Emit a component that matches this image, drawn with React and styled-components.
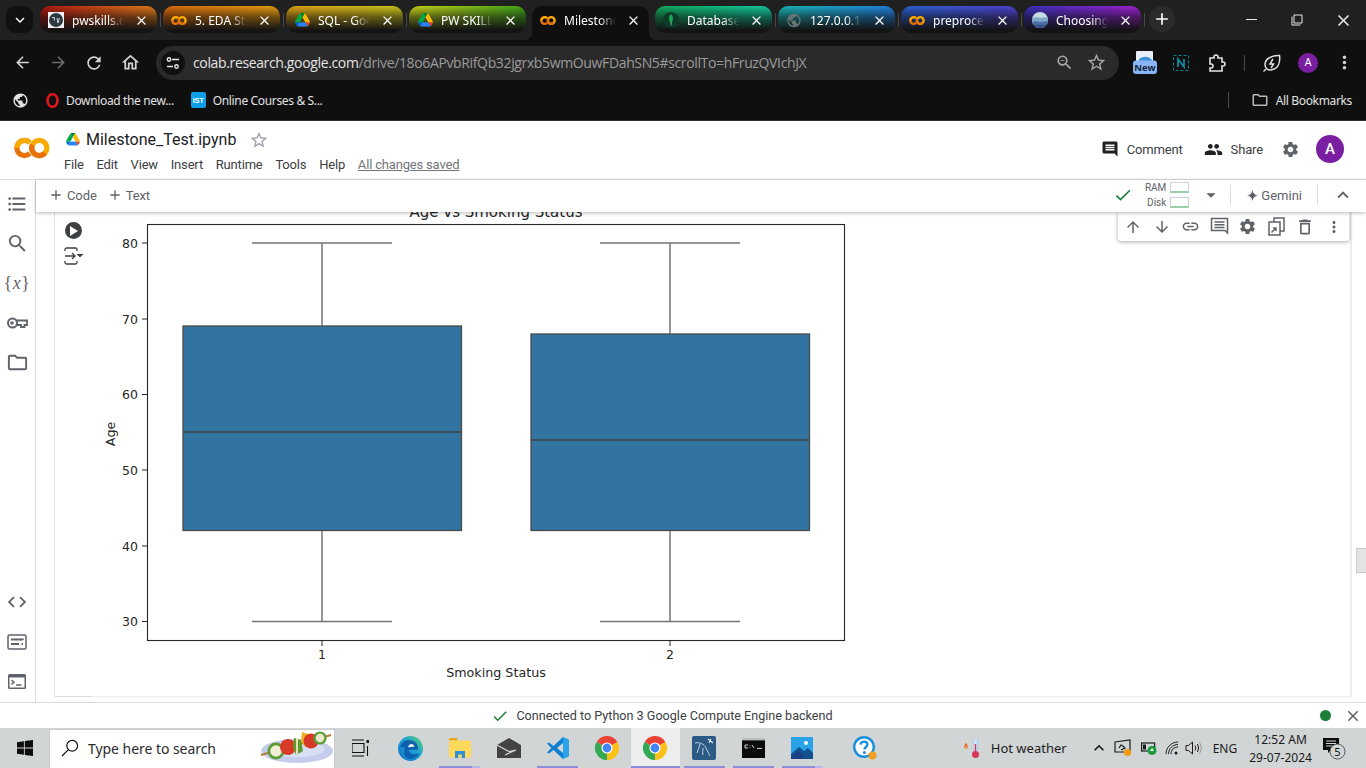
import React from "react";
import styled, { createGlobalStyle } from "styled-components";
import {
  MdArrowBack, MdArrowForward, MdRefresh, MdOutlineHome, MdClose, MdAdd, MdStarBorder, MdKeyboardArrowDown,
  MdMoreVert, MdPublic, MdComment, MdPeople, MdSettings, MdCheck, MdArrowDropDown, MdKeyboardArrowUp,
  MdArrowUpward, MdArrowDownward, MdLink, MdDeleteOutline, MdFormatListBulleted, MdSearch, MdOutlineFolder,
  MdCode, MdZoomOut, MdFilterNone,
} from "react-icons/md";

const Global = createGlobalStyle`
  html, body { margin: 0; padding: 0; background: #fff; overflow: hidden; }
  * { box-sizing: border-box; }
`;

const Page = styled.div`
  width: 1366px; height: 768px; display: flex; flex-direction: column; overflow: hidden;
  font-family: Roboto, "Liberation Sans", sans-serif;
`;

/* ---------- Chrome: tab strip ---------- */
const TabStrip = styled.div`
  height: 40px; flex: none; background: #202020; display: flex; align-items: flex-start;
  padding: 6px 0 0 6px; font-family: "Noto Sans", sans-serif;
`;
const TabMenu = styled.div`
  width: 27px; height: 27px; margin-right: 7px; border-radius: 9px; background: #111;
  display: flex; align-items: center; justify-content: center; color: #fff;
`;
const Tab = styled.div`
  width: 117px; height: 27px; border-radius: 10px; display: flex; align-items: center; flex: none;
  padding: 1px 8px 0 8px; color: #fff; font-size: 12px;
  background: linear-gradient(180deg, rgba(16,16,16,0) 0%, rgba(16,16,16,.55) 40%, #131313 90%),
    linear-gradient(90deg, ${(p) => p.$from}, ${(p) => p.$to});
`;
const ActiveTab = styled(Tab)`
  height: 34px; background: #0f0f0f; border-radius: 10px 10px 0 0; padding-bottom: 7px; position: relative;
  &::before, &::after {
    content: ""; position: absolute; bottom: 0; width: 8px; height: 8px;
  }
  &::before { left: -8px; background: radial-gradient(circle at 0 0, transparent 8px, #0f0f0f 8.5px); }
  &::after { right: -8px; background: radial-gradient(circle at 100% 0, transparent 8px, #0f0f0f 8.5px); }
`;
const TabIcon = styled.span`
  width: 16px; height: 16px; flex: none; display: flex; align-items: center; justify-content: center;
`;
const TabTitle = styled.span`
  width: 52px; margin-left: 8px; white-space: nowrap; overflow: hidden; flex: none;
  -webkit-mask-image: linear-gradient(90deg, #000 68%, transparent 100%);
  mask-image: linear-gradient(90deg, #000 68%, transparent 100%);
`;
const TabClose = styled.span`
  margin-left: auto; margin-right: 0; display: flex; color: #fff;
`;
const TabSep = styled.span`
  width: 1px; height: 14px; margin: 7px 2.5px 0; background: ${(p) => (p.$hidden ? "transparent" : "#484848")}; flex: none;
`;
const NewTab = styled.div`
  width: 26px; height: 26px; border-radius: 50%; background: #2b2b2b; color: #fff; margin-left: 2px;
  display: flex; align-items: center; justify-content: center; flex: none;
`;
const WindowControls = styled.div`
  margin-left: auto; display: flex; color: #e8e8e8; margin-top: -6px; height: 40px;
`;
const WindowButton = styled.div`
  width: 46px; height: 40px; display: flex; align-items: center; justify-content: center;
`;

/* ---------- Chrome: address bar ---------- */
const AddressRow = styled.div`
  height: 45px; flex: none; background: #0f0f0f; display: flex; align-items: center; padding-left: 4px;
  font-family: "Noto Sans", sans-serif;
`;
const NavButton = styled.div`
  width: 36px; height: 34px; flex: none; display: flex; align-items: center; justify-content: center;
  color: ${(p) => (p.$dim ? "#6b6b6b" : "#d4d4d4")};
`;
const Omnibox = styled.div`
  width: 963px; height: 34px; flex: none; border-radius: 17px; background: #2a2a2a; margin: 0 8px;
  display: flex; align-items: center; padding: 0 7px 0 5px;
`;
const SiteChip = styled.div`
  width: 24px; height: 24px; border-radius: 50%; background: #101010; flex: none; color: #e6e6e6;
  display: flex; align-items: center; justify-content: center;
`;
const Url = styled.span`
  margin-left: 8px; margin-right: auto; font-size: 14px; color: #9b9b9b; white-space: nowrap; font-family: "Open Sans", sans-serif; letter-spacing: -0.36px;
  b { font-weight: 400; color: #e4e4e4; }
`;
const OmniIcon = styled.div`
  width: 32px; display: flex; justify-content: center; color: #a8a8a8; flex: none;
`;
const ToolSep = styled.span`
  width: 1px; height: 16px; background: #4a4a4a; margin: 0 9px; flex: none;
`;
const Avatar = styled.div`
  width: ${(p) => p.$size}px; height: ${(p) => p.$size}px; border-radius: 50%; background: #7b1fa2; color: #fff; flex: none;
  display: flex; align-items: center; justify-content: center; font-size: ${(p) => p.$font}px;
  font-family: Roboto, sans-serif; font-weight: ${(p) => p.$weight || 400};
`;

/* ---------- Chrome: bookmarks ---------- */
const BookmarkRow = styled.div`
  height: 35px; flex: none; background: #0f0f0f; display: flex; align-items: center; padding: 0 14px 5px 12px;
  color: #e2e2e2; font-size: 12px; font-family: "Noto Sans", sans-serif; letter-spacing: -0.35px;
`;
const Bookmark = styled.span`
  display: flex; align-items: center; gap: ${(p) => p.$gap}px; margin-left: ${(p) => p.$left}px; white-space: nowrap;
`;
const IstBadge = styled.span`
  width: 15px; height: 16px; background: #0a9fe6; color: #fff; border-radius: 2px; font-size: 7px; font-weight: 700; letter-spacing: 0;
  display: flex; align-items: center; justify-content: center; font-family: "Liberation Sans", sans-serif;
`;
const BookmarkEnd = styled.div`
  margin-left: auto; display: flex; align-items: center; gap: 7px;
`;
const BookmarkSep = styled.span`
  width: 1px; height: 16px; background: #4a4a4a; margin-right: 15px;
`;

/* ---------- Colab header ---------- */
const ColabHeader = styled.header`
  height: 60px; flex: none; background: #fff; border-top: 1px solid #2e2e2e; border-bottom: 1px solid #dadce0;
  display: flex; align-items: flex-start; padding-left: 14px;
`;
const LogoSlot = styled.div`
  width: 50px; height: 100%; display: flex; align-items: center; flex: none; padding-bottom: 4px;
`;
const TitleBlock = styled.div`
  display: flex; flex-direction: column; padding-top: 8px;
`;
const TitleRow = styled.div`
  display: flex; align-items: center; height: 21px; padding-left: 2px;
`;
const Title = styled.span`
  font-size: 16px; color: #202124; margin-left: 6px;
`;
const TitleStar = styled.span`
  display: flex; color: #9aa0a6; margin-left: 13px;
`;
const MenuRow = styled.nav`
  display: flex; gap: 12.8px; font-size: 13px; color: #3c4043; margin-top: 4px; height: 20px; align-items: center; letter-spacing: -0.18px;
`;
const Saved = styled.span`
  color: #70757a; text-decoration: underline;
`;
const HeaderRight = styled.div`
  margin-left: auto; height: 100%; display: flex; align-items: center; padding: 0 22px 2px 0; font-size: 13px; color: #3c4043; letter-spacing: -0.15px;
`;
const HeaderAction = styled.span`
  display: flex; align-items: center; gap: 8px; margin-right: ${(p) => p.$right}px;
`;

/* ---------- Colab body ---------- */
const Main = styled.div`
  height: 522px; flex: none; display: flex; background: #fff;
`;
const Sidebar = styled.aside`
  width: 36px; flex: none; border-right: 1px solid #dadce0; display: flex; flex-direction: column;
  justify-content: space-between; padding: 12px 0 9px; color: #5f6368;
`;
const SideGroup = styled.div`
  display: flex; flex-direction: column; gap: 15.5px; align-items: center; padding-right: 1px;
`;
const SideIcon = styled.span`
  width: 24px; height: 24px; display: flex; align-items: center; justify-content: center;
`;
const VarIcon = styled(SideIcon)`
  font-family: "Liberation Serif", serif; font-size: 18px; white-space: nowrap; letter-spacing: 0.5px;
  i { font-style: italic; }
`;
const Workspace = styled.div`
  flex: 1; min-width: 0; display: flex; flex-direction: column;
`;
const NotebookBar = styled.div`
  height: 32px; flex: none; display: flex; align-items: center; padding: 0 12px 2px 12px; background: #fff; font-size: 13px; color: #5f6368;
  box-shadow: 0 1px 4px rgba(0,0,0,.28); position: relative; z-index: 3;
`;
const AddCell = styled.span`
  display: flex; align-items: center; gap: 3px; margin-right: 10px; letter-spacing: -0.1px;
`;
const BarRight = styled.div`
  margin-left: auto; display: flex; align-items: center; height: 100%;
`;
const Meters = styled.div`
  display: grid; grid-template-columns: auto 19px; column-gap: 4px; row-gap: 4px; font-size: 10px; color: #5f6368; margin: 0 0 0 12px;
  justify-items: end; align-items: center;
`;
const Meter = styled.span`
  width: 19px; height: 11px; border: 1px solid #cfd2d5; border-bottom: 2px solid #9ccfa9; display: block;
`;
const DropSlot = styled.span`
  display: flex; margin-left: 11px;
`;
const BarSep = styled.span`
  width: 1px; height: 20px; background: #dadce0; margin: ${(p) => p.$margin};
`;
const Gemini = styled.span`
  display: flex; align-items: center; gap: 3px;
`;
const Content = styled.div`
  flex: 1; min-height: 0; position: relative; overflow: hidden; padding-left: 18px; display: flex; align-items: flex-start;
`;
const Cell = styled.div`
  width: 1298px; height: 485px; border-left: 1px solid #e3e3e3; border-right: 2px solid #ededed; border-bottom: 1px solid #eeeeee;
  display: flex; position: relative; flex: none;
  &::after { content: ""; position: absolute; left: 0; bottom: -1px; width: 36px; height: 1px; background: #dcdcdc; }
`;
const Gutter = styled.div`
  width: 37px; flex: none; display: flex; flex-direction: column; align-items: center; padding-top: 10px; gap: 8px; color: #3c4043;
`;
const RunButton = styled.span`
  width: 17px; height: 17px; border-radius: 50%; background: #3c4043; display: flex; align-items: center; justify-content: center; flex: none;
`;
const Plot = styled.svg`
  display: block; width: 900px; height: 484px; flex: none;
  text { font-family: "DejaVu Sans", sans-serif; fill: #262626; }
`;
const CellTools = styled.div`
  position: absolute; top: 0; right: 17px; width: 231px; height: 29px; background: #fff; border-radius: 0 0 3px 3px;
  box-shadow: 0 1px 4px rgba(0,0,0,.35); display: flex; align-items: center; justify-content: space-between; padding: 0 5px; color: #5f6368; z-index: 2;
`;
const CellTool = styled.span`
  width: 20px; height: 20px; display: flex; align-items: center; justify-content: center;
`;
const ScrollThumb = styled.div`
  position: absolute; right: 0; top: 336px; width: 10px; height: 25px; background: #e3e3e3; border: 1px solid #c9c9c9; border-right: 0;
`;

/* ---------- Status bar ---------- */
const StatusBar = styled.div`
  height: 26px; flex: none; background: #fff; border-top: 1px solid #dadce0; display: flex; align-items: center; position: relative;
  font-size: 12.6px; color: #3c4043; justify-content: center; padding-right: 42px;
`;
const StatusMsg = styled.span`
  display: flex; align-items: center; gap: 7px;
`;
const StatusEnd = styled.div`
  position: absolute; right: 4px; top: 0; height: 100%; display: flex; align-items: center; gap: 13px; color: #5f6368;
`;
const Dot = styled.span`
  width: 11px; height: 11px; border-radius: 50%; background: #188038;
`;

/* ---------- Windows taskbar ---------- */
const Taskbar = styled.footer`
  height: 40px; flex: none; background: #d1d5d5; display: flex; align-items: stretch; font-family: "Noto Sans", sans-serif; color: #1b1b1b;
`;
const StartButton = styled.div`
  width: 49px; display: flex; align-items: center; justify-content: center; flex: none;
`;
const SearchBox = styled.div`
  width: 286px; margin-top: 1px; background: #fff; display: flex; align-items: center; flex: none; padding: 0 0 2px 11px; position: relative;
  font-size: 14px; color: #2b2b2b; border: 1px solid #c8cbcb; border-bottom: 0; letter-spacing: -0.05px;
`;
const SearchText = styled.span`
  margin-left: 9px;
`;
const Kebab = styled.span`
  margin-left: auto; display: flex; margin-bottom: 2px;
`;
const TaskItem = styled.div`
  width: ${(p) => p.$w || 48.9}px; flex: none; display: flex; align-items: center; justify-content: center; position: relative;
  background: ${(p) => (p.$active ? "#eceeee" : "transparent")};
  margin-left: ${(p) => p.$left || 0}px;
  &::after {
    content: ${(p) => (p.$open ? '""' : "none")}; position: absolute; left: ${(p) => (p.$active ? 0 : 4)}px; right: ${(p) => (p.$active ? 0 : 4)}px; bottom: 0; height: 2px;
    background: ${(p) => (p.$stack ? "linear-gradient(90deg, #8c8cd8 80%, #b9b9e8 80%)" : "#8c8cd8")};
  }
`;
const Tray = styled.div`
  margin-left: auto; display: flex; align-items: center; font-size: 13px; padding-right: 20px;
`;
const Weather = styled.span`
  display: flex; align-items: center; gap: 9px; margin-right: 21px; white-space: nowrap;
`;
const TraySlot = styled.span`
  width: ${(p) => p.$w}px; display: flex; justify-content: center; flex: none;
`;
const Lang = styled.span`
  font-size: 12px; margin: 0 12px 0 8px;
`;
const Clock = styled.span`
  display: flex; flex-direction: column; align-items: center; font-size: 12px; line-height: 18px; margin-right: 10px; white-space: nowrap; padding-top: 2px; letter-spacing: 0.02px;
`;

/* ---------- Drawings ---------- */
const CoLogo = ({ w = 36, h = 22 }) => (
  <svg width={w} height={h} viewBox="0 0 36 22" fill="none">
    <circle cx="25.3" cy="11" r="7.6" stroke="#F9AB00" strokeWidth="5.2" />
    <path d="M18.5 7.6A7.6 7.6 0 0 0 25.3 18.6A7.6 7.6 0 0 0 31 16" stroke="#E8710A" strokeWidth="5.2" />
    <path d="M15.8 5.6A7.6 7.6 0 1 0 15.8 16.4" stroke="#E8710A" strokeWidth="5.2" />
    <path d="M3 11A7.6 7.6 0 0 1 15.8 5.6" stroke="#F9AB00" strokeWidth="5.2" />
  </svg>
);
const DriveLogo = ({ size = 15 }) => (
  <svg width={size} height={size * 0.9} viewBox="0 0 87.3 78">
    <path d="m6.6 66.85 3.85 6.65c.8 1.4 1.95 2.5 3.3 3.3l13.75-23.8h-27.5c0 1.55.4 3.1 1.2 4.5z" fill="#0066da" />
    <path d="m43.65 25-13.75-23.8c-1.35.8-2.5 1.9-3.3 3.3l-25.4 44a9.06 9.06 0 0 0 -1.2 4.5h27.5z" fill="#00ac47" />
    <path d="m73.55 76.8c1.35-.8 2.5-1.9 3.3-3.3l1.6-2.75 7.65-13.25c.8-1.4 1.2-2.95 1.2-4.5h-27.502l5.852 11.5z" fill="#ea4335" />
    <path d="m43.65 25 13.75-23.8c-1.35-.8-2.9-1.2-4.5-1.2h-18.5c-1.6 0-3.15.45-4.5 1.2z" fill="#00832d" />
    <path d="m59.8 53h-32.3l-13.75 23.8c1.35.8 2.9 1.2 4.5 1.2h50.8c1.6 0 3.15-.45 4.5-1.2z" fill="#2684fc" />
    <path d="m73.4 26.5-12.7-22c-.8-1.4-1.95-2.5-3.3-3.3l-13.75 23.8 16.15 28h27.45c0-1.55-.4-3.1-1.2-4.5z" fill="#ffba00" />
  </svg>
);
const PwIcon = () => (
  <svg width="16" height="16" viewBox="0 0 16 16">
    <rect width="16" height="16" fill="#f2f2f2" />
    <circle cx="8" cy="8" r="7" fill="#2b3a42" />
    <path d="M4 5.5h2.4v3M9 6l1 5 1.4-5" stroke="#e8e8e8" strokeWidth=".9" fill="none" />
  </svg>
);
const MongoIcon = () => (
  <svg width="16" height="16" viewBox="0 0 16 16">
    <circle cx="8" cy="8" r="8" fill="#0c3b2a" />
    <path d="M8 2c2.4 2.6 2.6 6.2 0 9.6C5.4 8.2 5.6 4.6 8 2z" fill="#13aa52" />
    <rect x="7.7" y="10" width=".7" height="3.4" fill="#b8c4c2" />
  </svg>
);
const WaveIcon = () => (
  <svg width="16" height="16" viewBox="0 0 16 16">
    <defs><clipPath id="wv"><circle cx="8" cy="8" r="8" /></clipPath></defs>
    <g clipPath="url(#wv)">
      <rect width="16" height="16" fill="#c6dbe6" />
      <path d="M0 6c4-2 8 1 16-1v11H0z" fill="#7fa6c6" />
      <path d="M0 10c4-2 8 1 16-1v7H0z" fill="#4d6fa6" />
      <path d="M0 13c4-1 8 1 16-1v4H0z" fill="#3a4f8a" />
    </g>
  </svg>
);
const ChromeLogo = ({ size = 24 }) => (
  <svg width={size} height={size} viewBox="0 0 24 24">
    <path d="M12 12L1.6 6A12 12 0 0 1 22.4 6z" fill="#ea4335" />
    <path d="M12 12L1.6 6A12 12 0 0 0 12 24z" fill="#34a853" />
    <path d="M12 12L22.4 6A12 12 0 0 1 12 24z" fill="#fbc116" />
    <circle cx="12" cy="12" r="5.6" fill="#fff" />
    <circle cx="12" cy="12" r="4.4" fill="#4285f4" />
  </svg>
);
const EdgeLogo = () => (
  <svg width="25" height="25" viewBox="0 0 24 24">
    <defs>
      <linearGradient id="eg" x1="0" y1="1" x2="1" y2="0">
        <stop offset="0" stopColor="#0b6fc4" /><stop offset=".55" stopColor="#1e9fd8" /><stop offset="1" stopColor="#5ed46a" />
      </linearGradient>
    </defs>
    <circle cx="12" cy="12" r="12" fill="url(#eg)" />
    <path d="M2 10C4 5 9 3.4 13 4.4c4.5 1.2 6.6 4.4 6.2 8.8h-9c.2 3 3 4.6 6 4.4 1.6-.1 3-.6 4-1.2-1.6 4.2-6 6.6-10 5.2C6 20 4.6 15 7 11.6 5 11 3.4 10.4 2 10z" fill="#0a57a5" opacity=".85" />
    <path d="M9.6 10.8c.2-2.2 2-3.4 3.6-3.2 1.4.2 2.4 1.4 2.4 2.8z" fill="#fff" opacity=".9" />
  </svg>
);
const FolderApp = () => (
  <svg width="24" height="22" viewBox="0 0 24 22">
    <path d="M1 2.5C1 1.7 1.7 1 2.5 1h6l2 2.5H1z" fill="#e8a317" />
    <rect x="1" y="3.5" width="22" height="17" rx="1" fill="#ffd95c" />
    <path d="M7 21v-7h10v7h-3.2v-3.5h-3.6V21z" fill="#2f8fd8" />
  </svg>
);
const MailApp = () => (
  <svg width="24" height="20" viewBox="0 0 24 20">
    <path d="M0 7L12 0l12 7v13H0z" fill="#434343" />
    <path d="M0 7l12 6.6 7-1.6L8 17" stroke="#d1d5d5" strokeWidth="1.2" fill="none" />
  </svg>
);
const VsCode = () => (
  <svg width="24" height="24" viewBox="0 0 24 24">
    <path d="M17 1l6 3v16l-6 3L7.5 14l-4.6 3.6L1 16.4 5.4 12 1 7.6l1.9-1.2L7.5 10z" fill="#0e7fd0" />
    <path d="M17 7l-6 5 6 5z" fill="#d1d5d5" />
    <path d="M17 1l6 3v16l-6 3z" fill="#2aa3ec" />
  </svg>
);
const MySqlApp = () => (
  <svg width="24" height="24" viewBox="0 0 24 24">
    <rect width="24" height="24" rx="2" fill="#2b5a84" />
    <path d="M3 7c5-1 9 1 11 5s3 6 4 8M8 8c-1 4-2 6-3 9M11 12c0 3-1 4 0 7" stroke="#c7d6e2" strokeWidth="1" fill="none" />
    <path d="M16 3l5 4M19 3l-2 4" stroke="#e6edf2" strokeWidth="1.1" fill="none" />
  </svg>
);
const CmdApp = () => (
  <svg width="23" height="20" viewBox="0 0 23 20">
    <rect width="23" height="20" fill="#0b0b0b" />
    <rect width="23" height="2.4" fill="#b9bcbc" />
    <path d="M3 7h3M3 7v3h3M8 7v.6M8 9.4v.6M10 7l2 3M15 10.4h5" stroke="#d6d6d6" strokeWidth="1" fill="none" />
  </svg>
);
const PhotosApp = () => (
  <svg width="22" height="22" viewBox="0 0 22 22">
    <rect width="22" height="22" fill="#29a3e8" />
    <circle cx="15" cy="6" r="2" fill="#fff" />
    <path d="M0 17l8-7 5 4 4-3 5 5v6H0z" fill="#12518f" />
    <path d="M0 20l8-6 6 8H0z" fill="#1c3f86" />
  </svg>
);
const HelpApp = () => (
  <svg width="24" height="24" viewBox="0 0 24 24">
    <circle cx="11" cy="11" r="11" fill="#1a8ee0" />
    <circle cx="11" cy="11" r="8.6" fill="#fff" />
    <path d="M7.6 8.6C7.8 6.6 9.2 5.6 11 5.6c2 0 3.4 1.2 3.4 3 0 2.4-3 2.4-3 5" stroke="#1a8ee0" strokeWidth="2.4" fill="none" />
    <circle cx="11.4" cy="16.4" r="1.5" fill="#1a8ee0" />
    <circle cx="19.5" cy="19.5" r="4" fill="#f0a020" />
  </svg>
);
const WinLogo = () => (
  <svg width="16" height="16" viewBox="0 0 16 16" fill="#0c0c0c">
    <path d="M0 2.2L6.9 1.2V7.6H0zM7.8 1.1L16 0V7.6H7.8zM0 8.4H6.9V14.8L0 13.8zM7.8 8.4H16V16L7.8 14.9z" />
  </svg>
);
const Magnifier = () => (
  <svg width="18" height="18" viewBox="0 0 18 18" fill="none" stroke="#111" strokeWidth="1.2">
    <circle cx="11.2" cy="6.8" r="5.4" /><path d="M7.2 10.8L1 17" />
  </svg>
);
const KebabArt = () => (
  <svg width="74" height="34" viewBox="0 0 74 34">
    <ellipse cx="37" cy="21" rx="36" ry="12" fill="#c4cdec" />
    <ellipse cx="37" cy="19" rx="28" ry="8" fill="#d8def3" />
    <path d="M1 25L71 5" stroke="#b07a3a" strokeWidth="2" />
    <circle cx="16" cy="21" r="8.5" fill="#5c9a34" /><circle cx="16" cy="21" r="5.8" fill="#f1efd6" />
    <circle cx="28" cy="17" r="8" fill="#d83a28" />
    <path d="M34 8l7 2 2 11-7 4-3-8z" fill="#5f9a2e" /><path d="M36 8l2 1v15l-2 1z" fill="#e6e0b8" />
    <path d="M42 2l9 3 0 10-6 2-4-6z" fill="#f0b020" />
    <circle cx="51" cy="11" r="7.5" fill="#d83a28" />
    <circle cx="60" cy="8" r="6.6" fill="#5c9a34" /><circle cx="60" cy="8" r="4.4" fill="#e8e8c8" />
  </svg>
);
const TaskView = () => (
  <svg width="18" height="18" viewBox="0 0 18 18" fill="none" stroke="#111" strokeWidth="1.1">
    <path d="M0 1h12M0 17h12M0 4.5h12v9H0z" /><rect x="14.5" y="1" width="2.5" height="3" fill="#111" stroke="none" /><path d="M15.5 7v10" />
  </svg>
);
const OutputIcon = () => (
  <svg width="20" height="18" viewBox="0 0 20 18" fill="none" stroke="#3c4043" strokeWidth="1.3">
    <path d="M1 4V2.5C1 1.6 1.6 1 2.5 1h9C12.4 1 13 1.6 13 2.5V4M1 14v1.5c0 .9.6 1.5 1.500 1.5h9c.9 0 1.500-.6 1.500-1.500V14" />
    <path d="M1 9h10M8 6l3 3-3 3" /><path d="M12.500 7h7l-3.500 3.500z" fill="#3c4043" stroke="none" />
  </svg>
);
const CommentLines = () => (
  <svg width="19" height="19" viewBox="0 0 19 19" fill="none" stroke="#5f6368" strokeWidth="1.5">
    <path d="M1.500 1.500h16v14.500l-2.500-2.500H1.500z" /><path d="M4.500 5h10M4.500 7.800h10M4.500 10.600h10" />
  </svg>
);
const MirrorIcon = () => (
  <svg width="17" height="19" viewBox="0 0 17 19" fill="none" stroke="#5f6368" strokeWidth="1.500">
    <path d="M6 5V1h10v13h-4" /><path d="M1 5h11v13H1z" /><path d="M3.500 15.500l4.500-4.500M5 11h3v3" />
  </svg>
);
const KeyIcon = () => (
  <svg width="21" height="12" viewBox="0 0 21 12" fill="none" stroke="#5f6368" strokeWidth="2">
    <circle cx="5.500" cy="6" r="4.500" /><path d="M10 3.500h10V8h-2.500v2H14V8h-4" strokeWidth="1.800" /><circle cx="5" cy="6" r=".8" fill="#5f6368" />
  </svg>
);
const FormIcon = () => (
  <svg width="20" height="16" viewBox="0 0 20 16" fill="none" stroke="#5f6368" strokeWidth="1.500">
    <rect x="1" y="1" width="18" height="14" rx="1.500" /><path d="M4 5.500h12v.2M4 10h8M14.500 10h1.500" strokeWidth="1.800" />
  </svg>
);
const TerminalIcon = () => (
  <svg width="18" height="15" viewBox="0 0 18 15">
    <rect width="18" height="15" rx="1.500" fill="#5f6368" /><rect x="1.500" y="3.500" width="15" height="10" fill="#fff" />
    <path d="M3.500 6l2.500 2.200-2.500 2.200M8 11h5.500" stroke="#5f6368" strokeWidth="1.500" fill="none" />
  </svg>
);
const SparkIcon = () => (
  <svg width="11" height="11" viewBox="0 0 12 12"><path d="M6 0c.5 3.500 2.500 5.500 6 6-3.500.5-5.500 2.500-6 6-.5-3.500-2.500-5.500-6-6 3.500-.5 5.500-2.500 6-6z" fill="#5f6368" /></svg>
);
const NewExt = () => (
  <svg width="25" height="23" viewBox="0 0 25 23">
    <rect x="3" y="0" width="17" height="12" rx="1" fill="#e6eef8" />
    <path d="M6 8c5-3 9-3 13 1v3H6z" fill="#3c8fd8" />
    <rect x="0" y="9.500" width="24" height="13.500" rx="3" fill="#8ab4f8" />
    <text x="12" y="20" textAnchor="middle" fontSize="9.500" fontWeight="700" fill="#15243a" fontFamily="Noto Sans, sans-serif">New</text>
  </svg>
);
const NExt = () => (
  <svg width="16" height="16" viewBox="0 0 16 16" fill="none">
    <rect x=".5" y=".5" width="15" height="15" stroke="#0f7f95" strokeDasharray="3 2" />
    <path d="M5 12V4l6 8V4" stroke="#0f8ea6" strokeWidth="1.700" />
  </svg>
);
const Puzzle = () => (
  <svg width="18" height="18" viewBox="0 0 18 18" fill="none" stroke="#e4e4e4" strokeWidth="1.600">
    <path d="M2 4h4V3a2 2 0 0 1 4 0v1h4v4h1a2 2 0 0 1 0 4h-1v5H2v-3h1a2 2 0 0 0 0-4H2z" />
  </svg>
);
const LeafExt = () => (
  <svg width="20" height="20" viewBox="0 0 20 20" fill="none" stroke="#e0e0e0" strokeWidth="1.500">
    <path d="M17.500 2.500C18.500 10 16 16 9 17c-3 .4-6-2-6-5.500C3 6 10 2 17.500 2.500z" /><path d="M11 6l-3 5h3.500l-2.500 4" />
    <path d="M1.500 18.500L4 16" />
  </svg>
);
const SiteTune = () => (
  <svg width="14" height="14" viewBox="0 0 14 14" fill="none" stroke="#e6e6e6" strokeWidth="1.400">
    <circle cx="3" cy="3.500" r="1.700" /><path d="M6 3.500h7M1 10.500h6" /><circle cx="10.500" cy="10.500" r="1.700" />
  </svg>
);
const OperaO = () => (
  <svg width="13" height="15" viewBox="0 0 13 15"><ellipse cx="6.500" cy="7.500" rx="5" ry="6.300" fill="none" stroke="#e3141e" strokeWidth="2.600" /></svg>
);
const Thermo = () => (
  <svg width="20" height="24" viewBox="0 0 20 24">
    <path d="M4 7c-2 2-2.500 5 0 6 2.500-1 2-4 0-6z" fill="#e8642a" /><path d="M4 10c-1 1-1 2.500 0 3 1-.5 1-2 0-3z" fill="#ffc04a" />
    <rect x="11.500" y="2" width="4" height="15" rx="2" fill="#cfe3f5" stroke="#9cc6ea" strokeWidth=".6" />
    <circle cx="13.500" cy="18.500" r="3.500" fill="#d6365a" /><rect x="12.800" y="8" width="1.400" height="9" fill="#d6365a" />
  </svg>
);
const TrayDisplay = () => (
  <svg width="18" height="18" viewBox="0 0 18 18" fill="none" stroke="#1b1b1b" strokeWidth="1.200">
    <path d="M1 3l15-2v12H1z" /><path d="M5 9l2-3 2 1M7 11l4-2-2-2" /><circle cx="13.500" cy="13.500" r="3.600" fill="#f59a0b" stroke="none" />
  </svg>
);
const TrayBattery = () => (
  <svg width="16" height="15" viewBox="0 0 16 15" fill="none">
    <rect x=".6" y="2" width="13" height="8" stroke="#1b1b1b" strokeWidth="1.200" /><rect x="2" y="3.500" width="3" height="5" fill="#1b1b1b" />
    <circle cx="11" cy="9.500" r="4.500" fill="#1a9a3c" /><path d="M11 7l-2 3h4z" fill="#fff" />
  </svg>
);
const TrayWifi = () => (
  <svg width="14" height="14" viewBox="0 0 14 14" fill="none" stroke="#1b1b1b" strokeWidth="1">
    <path d="M1 13C1 6.500 6.500 1 13 1M3.500 13c0-5.200 4.300-9.500 9.500-9.500M6 13c0-3.900 3.100-7 7-7" /><circle cx="11" cy="12" r="1.500" fill="#1b1b1b" stroke="none" />
  </svg>
);
const TraySound = () => (
  <svg width="17" height="14" viewBox="0 0 17 14" fill="none" stroke="#1b1b1b" strokeWidth="1">
    <path d="M1 4.500h2.500L7.500 1v12L3.500 9.500H1z" /><path d="M10 4.500c1 1.500 1 3.500 0 5M12.300 3c1.600 2.500 1.600 5.500 0 8" /><path d="M14.500 1.500c2.200 3.400 2.200 7.600 0 11" stroke="#9a9a9a" />
  </svg>
);
const Notify = () => (
  <svg width="24" height="24" viewBox="0 0 24 24">
    <path d="M1 2h16v12H9l-3 3v-3H1z" fill="#0b0b0b" />
    <path d="M4 5h10M4 7.500h10M4 10h7" stroke="#d1d5d5" strokeWidth="1" />
    <circle cx="15.500" cy="15.500" r="7.500" fill="#d1d5d5" stroke="#555" strokeWidth="1" />
    <text x="15.500" y="19.500" textAnchor="middle" fontSize="11" fill="#111" fontFamily="Noto Sans, sans-serif">5</text>
  </svg>
);

/* ---------- Data ---------- */
const tabs = [
  { title: "pwskills.com", from: "#b01510", to: "#e07c18", icon: <PwIcon /> },
  { title: "5. EDA Study", from: "#d8680c", to: "#e49c10", icon: <CoLogo w={17} h={11} /> },
  { title: "SQL - Google", from: "#dba014", to: "#c9c41a", icon: <DriveLogo size={15} /> },
  { title: "PW SKILLS", from: "#c8d018", to: "#3fa51a", icon: <DriveLogo size={15} /> },
  { title: "Milestone_Test", active: true, icon: <CoLogo w={17} h={11} /> },
  { title: "Database", from: "#10a85a", to: "#10c8a0", icon: <MongoIcon /> },
  { title: "127.0.0.1:5000", from: "#18b4b0", to: "#2080e0", icon: <MdPublic size={17} color="#6a7476" /> },
  { title: "preprocessing", from: "#2a60d0", to: "#5040d0", icon: <CoLogo w={17} h={11} /> },
  { title: "Choosing a", from: "#3a30c0", to: "#a020d0", icon: <WaveIcon /> },
];
const yTicks = [[80, 243], [70, 319], [60, 394.5], [50, 470], [40, 546], [30, 621.5]];
const boxes = [
  { cx: 322, x: 183, top: 326, med: 432, label: "1" },
  { cx: 670, x: 531, top: 334, med: 440, label: "2" },
];

const Chart = () => (
  <Plot viewBox="92 212 900 484">
    <text x="496" y="216.500" fontSize="15" textAnchor="middle">Age vs Smoking Status</text>
    <rect x="147.500" y="224.500" width="697" height="416" fill="#fff" stroke="#262626" strokeWidth="1.100" />
    {yTicks.map(([v, y]) => (
      <g key={v}>
        <path d={`M142 ${y}h5.500`} stroke="#262626" strokeWidth="1" />
        <text x="138" y={y + 4.500} fontSize="12.500" textAnchor="end">{v}</text>
      </g>
    ))}
    {boxes.map((b) => (
      <g key={b.label}>
        <path d={`M${b.cx} 243V${b.top}M${b.cx} 530.500V621.500M${b.cx - 70} 243h140M${b.cx - 70} 621.500h140`} stroke="#757575" strokeWidth="1.500" fill="none" />
        <rect x={b.x} y={b.top} width="278.500" height={530.500 - b.top} fill="#3274a1" stroke="#4a4a4a" strokeWidth="1.300" />
        <path d={`M${b.x} ${b.med}h278.500`} stroke="#434343" strokeWidth="1.300" />
        <path d={`M${b.cx} 641v5`} stroke="#262626" strokeWidth="1" />
        <text x={b.cx} y="659" fontSize="12.500" textAnchor="middle">{b.label}</text>
      </g>
    ))}
    <text x="496" y="677" fontSize="12.700" textAnchor="middle">Smoking Status</text>
    <text transform="translate(114.500 434) rotate(-90)" fontSize="12.700" textAnchor="middle">Age</text>
  </Plot>
);

export default function App() {
  return (
    <Page>
      <Global />
      <TabStrip>
        <TabMenu><MdKeyboardArrowDown size={18} /></TabMenu>
        {tabs.map((t, i) => {
          const Comp = t.active ? ActiveTab : Tab;
          return (
            <React.Fragment key={t.title}>
              <Comp $from={t.from} $to={t.to}>
                <TabIcon>{t.icon}</TabIcon>
                <TabTitle>{t.title}</TabTitle>
                <TabClose><MdClose size={15} /></TabClose>
              </Comp>
              <TabSep $hidden={i === 3 || i === 4} />
            </React.Fragment>
          );
        })}
        <NewTab><MdAdd size={20} /></NewTab>
        <WindowControls>
          <WindowButton><svg width="11" height="2"><rect width="11" height="1" fill="#e8e8e8" /></svg></WindowButton>
          <WindowButton><MdFilterNone size={12} /></WindowButton>
          <WindowButton><MdClose size={19} /></WindowButton>
        </WindowControls>
      </TabStrip>

      <AddressRow>
        <NavButton><MdArrowBack size={19} /></NavButton>
        <NavButton $dim><MdArrowForward size={19} /></NavButton>
        <NavButton><MdRefresh size={20} /></NavButton>
        <NavButton><MdOutlineHome size={21} /></NavButton>
        <Omnibox>
          <SiteChip><SiteTune /></SiteChip>
          <Url><b>colab.research.google.com</b>/drive/18o6APvbRifQb32jgrxb5wmOuwFDahSN5#scrollTo=hFruzQVIchJX</Url>
          <OmniIcon><MdZoomOut size={19} /></OmniIcon>
          <OmniIcon><MdStarBorder size={21} /></OmniIcon>
        </Omnibox>
        <NavButton><NewExt /></NavButton>
        <NavButton><NExt /></NavButton>
        <NavButton><Puzzle /></NavButton>
        <ToolSep />
        <NavButton><LeafExt /></NavButton>
        <NavButton><Avatar $size={20} $font={11}>A</Avatar></NavButton>
        <NavButton><MdMoreVert size={21} /></NavButton>
      </AddressRow>

      <BookmarkRow>
        <MdPublic size={17} color="#e4e4e4" />
        <Bookmark $left={17} $gap={7}><OperaO />Download the new...</Bookmark>
        <Bookmark $left={17} $gap={7}><IstBadge>IST</IstBadge>Online Courses &amp; S...</Bookmark>
        <BookmarkEnd>
          <BookmarkSep />
          <MdOutlineFolder size={18} color="#b8b8b8" />
          All Bookmarks
        </BookmarkEnd>
      </BookmarkRow>

      <ColabHeader>
        <LogoSlot><CoLogo /></LogoSlot>
        <TitleBlock>
          <TitleRow>
            <DriveLogo size={14} />
            <Title>Milestone_Test.ipynb</Title>
            <TitleStar><MdStarBorder size={20} /></TitleStar>
          </TitleRow>
          <MenuRow>
            <span>File</span><span>Edit</span><span>View</span><span>Insert</span><span>Runtime</span><span>Tools</span><span>Help</span>
            <Saved>All changes saved</Saved>
          </MenuRow>
        </TitleBlock>
        <HeaderRight>
          <HeaderAction $right={21}><MdComment size={18} color="#202124" />Comment</HeaderAction>
          <HeaderAction $right={18}><MdPeople size={19} color="#202124" />Share</HeaderAction>
          <HeaderAction $right={16}><MdSettings size={19} color="#5f6368" /></HeaderAction>
          <Avatar $size={28} $font={15} $weight={500}>A</Avatar>
        </HeaderRight>
      </ColabHeader>

      <Main>
        <Sidebar>
          <SideGroup>
            <SideIcon><MdFormatListBulleted size={22} /></SideIcon>
            <SideIcon><MdSearch size={23} /></SideIcon>
            <VarIcon>{"{"}<i>x</i>{"}"}</VarIcon>
            <SideIcon><KeyIcon /></SideIcon>
            <SideIcon><MdOutlineFolder size={23} /></SideIcon>
          </SideGroup>
          <SideGroup>
            <SideIcon><MdCode size={22} /></SideIcon>
            <SideIcon><FormIcon /></SideIcon>
            <SideIcon><TerminalIcon /></SideIcon>
          </SideGroup>
        </Sidebar>
        <Workspace>
          <NotebookBar>
            <AddCell><MdAdd size={16} />Code</AddCell>
            <AddCell><MdAdd size={16} />Text</AddCell>
            <BarRight>
              <MdCheck size={20} color="#188038" />
              <Meters>
                <span>RAM</span><Meter />
                <span>Disk</span><Meter />
              </Meters>
              <DropSlot><MdArrowDropDown size={22} /></DropSlot>
              <BarSep $margin="0 16px 0 8px" />
              <Gemini><SparkIcon />Gemini</Gemini>
              <BarSep $margin="0 14px 0 15px" />
              <MdKeyboardArrowUp size={22} />
            </BarRight>
          </NotebookBar>
          <Content>
            <Cell>
              <Gutter>
                <RunButton>
                  <svg width="9" height="10" viewBox="0 0 9 10"><path d="M1 0l8 5-8 5z" fill="#fff" /></svg>
                </RunButton>
                <OutputIcon />
              </Gutter>
              <Chart />
            </Cell>
            <CellTools>
              <CellTool><MdArrowUpward size={18} /></CellTool>
              <CellTool><MdArrowDownward size={18} /></CellTool>
              <CellTool><MdLink size={19} /></CellTool>
              <CellTool><CommentLines /></CellTool>
              <CellTool><MdSettings size={19} /></CellTool>
              <CellTool><MirrorIcon /></CellTool>
              <CellTool><MdDeleteOutline size={20} /></CellTool>
              <CellTool><MdMoreVert size={18} /></CellTool>
            </CellTools>
            <ScrollThumb />
          </Content>
        </Workspace>
      </Main>

      <StatusBar>
        <StatusMsg><MdCheck size={18} color="#188038" />Connected to Python 3 Google Compute Engine backend</StatusMsg>
        <StatusEnd><Dot /><MdClose size={18} /></StatusEnd>
      </StatusBar>

      <Taskbar>
        <StartButton><WinLogo /></StartButton>
        <SearchBox>
          <Magnifier />
          <SearchText>Type here to search</SearchText>
          <Kebab><KebabArt /></Kebab>
        </SearchBox>
        <TaskItem $w={51.5}><TaskView /></TaskItem>
        <TaskItem><EdgeLogo /></TaskItem>
        <TaskItem $open $stack><FolderApp /></TaskItem>
        <TaskItem><MailApp /></TaskItem>
        <TaskItem $open><VsCode /></TaskItem>
        <TaskItem><ChromeLogo /></TaskItem>
        <TaskItem $open $active><ChromeLogo /></TaskItem>
        <TaskItem $open><MySqlApp /></TaskItem>
        <TaskItem $open><CmdApp /></TaskItem>
        <TaskItem $open $stack><PhotosApp /></TaskItem>
        <TaskItem $left={14}><HelpApp /></TaskItem>
        <Tray>
          <Weather><Thermo />Hot weather</Weather>
          <TraySlot $w={22}><MdKeyboardArrowUp size={20} /></TraySlot>
          <TraySlot $w={27}><TrayDisplay /></TraySlot>
          <TraySlot $w={24}><TrayBattery /></TraySlot>
          <TraySlot $w={22}><TrayWifi /></TraySlot>
          <TraySlot $w={22}><TraySound /></TraySlot>
          <Lang>ENG</Lang>
          <Clock><span>12:52 AM</span><span>29-07-2024</span></Clock>
          <Notify />
        </Tray>
      </Taskbar>
    </Page>
  );
}
